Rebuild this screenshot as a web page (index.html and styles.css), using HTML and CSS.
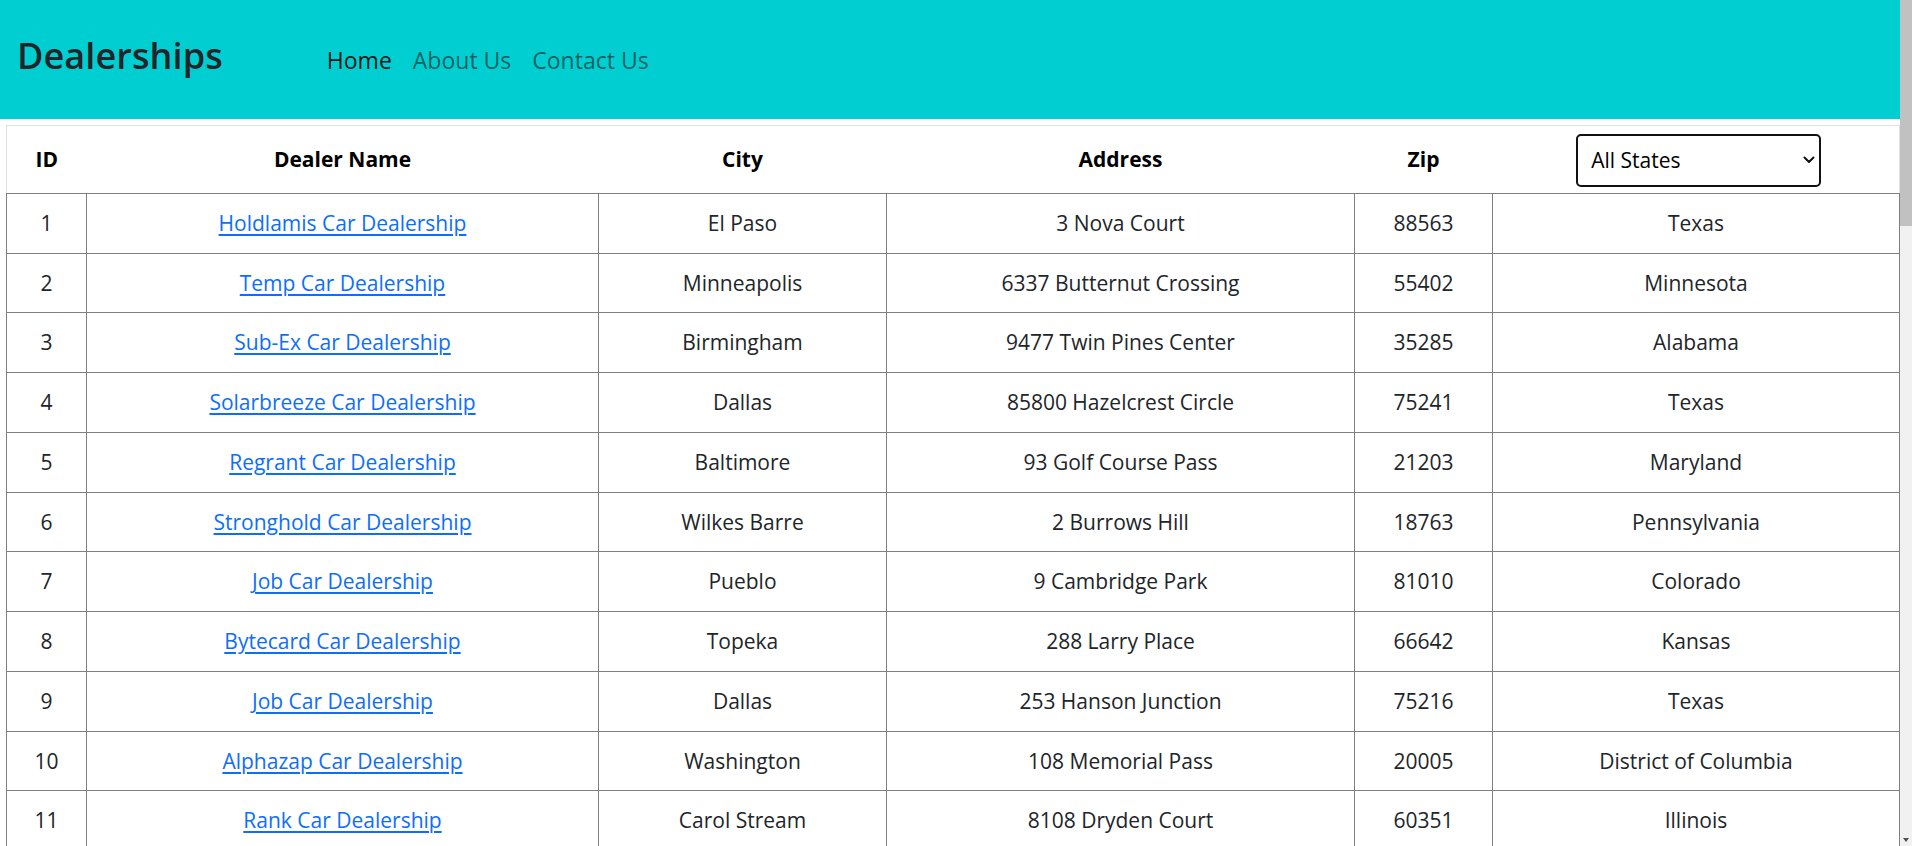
FILE: index.html
```html
<!DOCTYPE html>
<html lang="en">
<head>
<meta charset="utf-8">
<title>Dealerships</title>
<link rel="stylesheet" href="styles.css">
</head>
<body>
<header class="topbar">
  <span class="brand">Dealerships</span>
  <nav class="nav">
    <a class="nav-link active" href="#">Home</a>
    <a class="nav-link" href="#">About Us</a>
    <a class="nav-link" href="#">Contact Us</a>
  </nav>
</header>
<main class="content">
  <table class="dealers">
    <colgroup>
      <col class="c-id"><col class="c-name"><col class="c-city"><col class="c-addr"><col class="c-zip"><col class="c-state">
    </colgroup>
    <thead>
      <tr>
        <th>ID</th><th>Dealer Name</th><th>City</th><th>Address</th><th>Zip</th>
        <th>
          <span class="select-wrap">
            <select class="state-select"><option>All States</option><option>Texas</option><option>Minnesota</option></select>
            <svg class="chev" width="12" height="8" viewBox="0 0 12 8"><path d="M1.5 1.5 L6 6 L10.5 1.5" fill="none" stroke="#111" stroke-width="2" stroke-linecap="round" stroke-linejoin="round"/></svg>
          </span>
        </th>
      </tr>
    </thead>
    <tbody>
      <tr><td>1</td><td><a href="#">Holdlamis Car Dealership</a></td><td>El Paso</td><td>3 Nova Court</td><td>88563</td><td>Texas</td></tr>
      <tr><td>2</td><td><a href="#">Temp Car Dealership</a></td><td>Minneapolis</td><td>6337 Butternut Crossing</td><td>55402</td><td>Minnesota</td></tr>
      <tr><td>3</td><td><a href="#">Sub-Ex Car Dealership</a></td><td>Birmingham</td><td>9477 Twin Pines Center</td><td>35285</td><td>Alabama</td></tr>
      <tr><td>4</td><td><a href="#">Solarbreeze Car Dealership</a></td><td>Dallas</td><td>85800 Hazelcrest Circle</td><td>75241</td><td>Texas</td></tr>
      <tr><td>5</td><td><a href="#">Regrant Car Dealership</a></td><td>Baltimore</td><td>93 Golf Course Pass</td><td>21203</td><td>Maryland</td></tr>
      <tr><td>6</td><td><a href="#">Stronghold Car Dealership</a></td><td>Wilkes Barre</td><td>2 Burrows Hill</td><td>18763</td><td>Pennsylvania</td></tr>
      <tr><td>7</td><td><a href="#">Job Car Dealership</a></td><td>Pueblo</td><td>9 Cambridge Park</td><td>81010</td><td>Colorado</td></tr>
      <tr><td>8</td><td><a href="#">Bytecard Car Dealership</a></td><td>Topeka</td><td>288 Larry Place</td><td>66642</td><td>Kansas</td></tr>
      <tr><td>9</td><td><a href="#">Job Car Dealership</a></td><td>Dallas</td><td>253 Hanson Junction</td><td>75216</td><td>Texas</td></tr>
      <tr><td>10</td><td><a href="#">Alphazap Car Dealership</a></td><td>Washington</td><td>108 Memorial Pass</td><td>20005</td><td>District of Columbia</td></tr>
      <tr><td>11</td><td><a href="#">Rank Car Dealership</a></td><td>Carol Stream</td><td>8108 Dryden Court</td><td>60351</td><td>Illinois</td></tr>
      <tr><td>12</td><td><a href="#">Konklab Car Dealership</a></td><td>Sacramento</td><td>44 Sunnyside Drive</td><td>95818</td><td>California</td></tr>
      <tr><td>13</td><td><a href="#">Tampflex Car Dealership</a></td><td>Houston</td><td>712 Crest Line Road</td><td>77070</td><td>Texas</td></tr>
      <tr><td>14</td><td><a href="#">Zathin Car Dealership</a></td><td>Phoenix</td><td>5 Mallard Way</td><td>85020</td><td>Arizona</td></tr>
      <tr><td>15</td><td><a href="#">Fix San Car Dealership</a></td><td>Omaha</td><td>61 Crowley Hill</td><td>68144</td><td>Nebraska</td></tr>
      <tr><td>16</td><td><a href="#">Greenlam Car Dealership</a></td><td>Atlanta</td><td>7 Hoard Terrace</td><td>30343</td><td>Georgia</td></tr>
      <tr><td>17</td><td><a href="#">Voyatouch Car Dealership</a></td><td>Denver</td><td>190 Onsgard Street</td><td>80243</td><td>Colorado</td></tr>
      <tr><td>18</td><td><a href="#">Bitwolf Car Dealership</a></td><td>Seattle</td><td>4 Kennedy Point</td><td>98121</td><td>Washington</td></tr>
      <tr><td>19</td><td><a href="#">Treeflex Car Dealership</a></td><td>Orlando</td><td>37 Thierer Alley</td><td>32825</td><td>Florida</td></tr>
      <tr><td>20</td><td><a href="#">Otcom Car Dealership</a></td><td>Columbus</td><td>2289 Transport Avenue</td><td>43226</td><td>Ohio</td></tr>
      <tr><td>21</td><td><a href="#">Tempsoft Car Dealership</a></td><td>Austin</td><td>60 Westport Circle</td><td>78744</td><td>Texas</td></tr>
      <tr><td>22</td><td><a href="#">Andalax Car Dealership</a></td><td>Boston</td><td>8 Meadow Valley Lane</td><td>02208</td><td>Massachusetts</td></tr>
      <tr><td>23</td><td><a href="#">Lotlux Car Dealership</a></td><td>Nashville</td><td>903 Gateway Plaza</td><td>37215</td><td>Tennessee</td></tr>
      <tr><td>24</td><td><a href="#">Kanlam Car Dealership</a></td><td>Kansas City</td><td>52 Morrow Court</td><td>64125</td><td>Missouri</td></tr>
      <tr><td>25</td><td><a href="#">Viva Car Dealership</a></td><td>Las Vegas</td><td>1 Mandrake Junction</td><td>89130</td><td>Nevada</td></tr>
      <tr><td>26</td><td><a href="#">Daltfresh Car Dealership</a></td><td>Portland</td><td>3370 Talmadge Road</td><td>97211</td><td>Oregon</td></tr>
      <tr><td>27</td><td><a href="#">Flexidy Car Dealership</a></td><td>Charlotte</td><td>75 Bunting Pass</td><td>28230</td><td>North Carolina</td></tr>
      <tr><td>28</td><td><a href="#">Asoka Car Dealership</a></td><td>Tulsa</td><td>611 Ruskin Parkway</td><td>74149</td><td>Oklahoma</td></tr>
      <tr><td>29</td><td><a href="#">Ronstring Car Dealership</a></td><td>Detroit</td><td>17 Hallows Way</td><td>48242</td><td>Michigan</td></tr>
      <tr><td>30</td><td><a href="#">Cardguard Car Dealership</a></td><td>Richmond</td><td>4409 Moland Point</td><td>23225</td><td>Virginia</td></tr>
      <tr><td>31</td><td><a href="#">Aerified Car Dealership</a></td><td>Salt Lake City</td><td>29 Evergreen Crossing</td><td>84189</td><td>Utah</td></tr>
      <tr><td>32</td><td><a href="#">Wrapsafe Car Dealership</a></td><td>Louisville</td><td>6 Nelson Street</td><td>40205</td><td>Kentucky</td></tr>
      <tr><td>33</td><td><a href="#">Span Car Dealership</a></td><td>Milwaukee</td><td>81 Hayes Terrace</td><td>53220</td><td>Wisconsin</td></tr>
      <tr><td>34</td><td><a href="#">Sonair Car Dealership</a></td><td>Albuquerque</td><td>1520 Ridgeway Hill</td><td>87190</td><td>New Mexico</td></tr>
      <tr><td>35</td><td><a href="#">Latlux Car Dealership</a></td><td>San Antonio</td><td>98 Spenser Park</td><td>78255</td><td>Texas</td></tr>
      <tr><td>36</td><td><a href="#">Transcof Car Dealership</a></td><td>Newark</td><td>4 Pierstorff Avenue</td><td>07104</td><td>New Jersey</td></tr>
      <tr><td>37</td><td><a href="#">Duobam Car Dealership</a></td><td>Boise</td><td>55 Jay Hill</td><td>83757</td><td>Idaho</td></tr>
      <tr><td>38</td><td><a href="#">Cookley Car Dealership</a></td><td>Des Moines</td><td>716 Eagle Crest Drive</td><td>50393</td><td>Iowa</td></tr>
      <tr><td>39</td><td><a href="#">Zontrax Car Dealership</a></td><td>Jackson</td><td>23 Sutteridge Lane</td><td>39210</td><td>Mississippi</td></tr>
      <tr><td>40</td><td><a href="#">Fintone Car Dealership</a></td><td>Little Rock</td><td>804 Dorton Plaza</td><td>72209</td><td>Arkansas</td></tr>
      <tr><td>41</td><td><a href="#">Stim Car Dealership</a></td><td>Hartford</td><td>12 Banding Center</td><td>06145</td><td>Connecticut</td></tr>
      <tr><td>42</td><td><a href="#">Tres-Zap Car Dealership</a></td><td>Columbia</td><td>360 Golden Leaf Court</td><td>29215</td><td>South Carolina</td></tr>
      <tr><td>43</td><td><a href="#">Ventosanzap Car Dealership</a></td><td>Baton Rouge</td><td>9 Delladonna Road</td><td>70826</td><td>Louisiana</td></tr>
      <tr><td>44</td><td><a href="#">Quo Lux Car Dealership</a></td><td>Honolulu</td><td>27 Clyde Gallagher Way</td><td>96805</td><td>Hawaii</td></tr>
      <tr><td>45</td><td><a href="#">Hatity Car Dealership</a></td><td>Anchorage</td><td>1130 Northview Trail</td><td>99522</td><td>Alaska</td></tr>
      <tr><td>46</td><td><a href="#">Gembucket Car Dealership</a></td><td>Billings</td><td>66 Carey Alley</td><td>59105</td><td>Montana</td></tr>
      <tr><td>47</td><td><a href="#">Toughjoyfax Car Dealership</a></td><td>Fargo</td><td>5 Vidon Drive</td><td>58106</td><td>North Dakota</td></tr>
      <tr><td>48</td><td><a href="#">Matsoft Car Dealership</a></td><td>Sioux Falls</td><td>410 Lien Avenue</td><td>57105</td><td>South Dakota</td></tr>
      <tr><td>49</td><td><a href="#">Keylex Car Dealership</a></td><td>Charleston</td><td>8 Rowland Hill</td><td>25313</td><td>West Virginia</td></tr>
      <tr><td>50</td><td><a href="#">Biodex Car Dealership</a></td><td>Providence</td><td>71 Heffernan Park</td><td>02905</td><td>Rhode Island</td></tr>
    </tbody>
  </table>
</main>
<div class="scrollbar" aria-hidden="true">
  <div class="scrollbar-thumb"></div>
  <div class="scrollbar-arrow"></div>
</div>
</body>
</html>
```

FILE: styles.css
```css
html {
  background: #ffffff;
}
body {
  margin: 0;
  padding-right: 12px;
  font-family: "Open Sans", "Noto Sans", "Liberation Sans", sans-serif;
  color: #212529;
}
.topbar {
  display: flex;
  align-items: baseline;
  height: 119px;
  box-sizing: border-box;
  padding: 31px 0 0 17px;
  background: #00ced1;
}
.brand {
  font-size: 36px;
  font-weight: 600;
  color: #212529;
  letter-spacing: 0.1px;
}
.nav {
  display: flex;
  align-items: baseline;
  gap: 21px;
  margin-left: 104px;
}
.nav-link {
  font-size: 23px;
  text-decoration: none;
  color: rgba(0, 0, 0, 0.55);
}
.nav-link.active {
  color: rgba(0, 0, 0, 0.9);
}
.content {
  padding: 6px 0 0 6px;
}
.dealers {
  width: 100%;
  table-layout: fixed;
  border-collapse: collapse;
  border: 1px solid #dee2e6;
  font-size: 21px;
  text-align: center;
}
.c-id { width: 80px; }
.c-name { width: 512px; }
.c-city { width: 288px; }
.c-addr { width: 468px; }
.c-zip { width: 138px; }
.dealers th {
  padding: 6px 8px;
  font-weight: 700;
  color: #000;
  vertical-align: middle;
  border-bottom: 1px solid #808080;
  line-height: 53px;
}
.dealers td {
  padding: 15px 8px;
  line-height: 28.75px;
  border: 1px solid #808080;
  vertical-align: middle;
  color: #212529;
}
.dealers a {
  color: #0d6efd;
  text-decoration: underline;
  text-underline-offset: 3px;
}
.select-wrap {
  position: relative;
  display: inline-block;
  vertical-align: middle;
  line-height: normal;
  margin-left: 6px;
}
.state-select {
  appearance: none;
  -webkit-appearance: none;
  width: 245px;
  height: 53px;
  box-sizing: border-box;
  padding: 0 30px 0 13px;
  border: 2px solid #111;
  border-radius: 5px;
  background: #fff;
  font-family: "Open Sans", "Noto Sans", sans-serif;
  font-size: 21px;
  color: #000;
  display: block;
}
.chev {
  position: absolute;
  right: 6px;
  top: 22px;
  pointer-events: none;
}
.scrollbar {
  position: fixed;
  top: 0;
  right: 0;
  width: 12px;
  height: 100vh;
  background: #f1f1f1;
}
.scrollbar-thumb {
  height: 226px;
  background: #c1c1c1;
}
.scrollbar-arrow {
  position: absolute;
  bottom: 4px;
  left: 3px;
  width: 0;
  height: 0;
  border-left: 3.5px solid transparent;
  border-right: 3.5px solid transparent;
  border-top: 4px solid #505050;
}
```
